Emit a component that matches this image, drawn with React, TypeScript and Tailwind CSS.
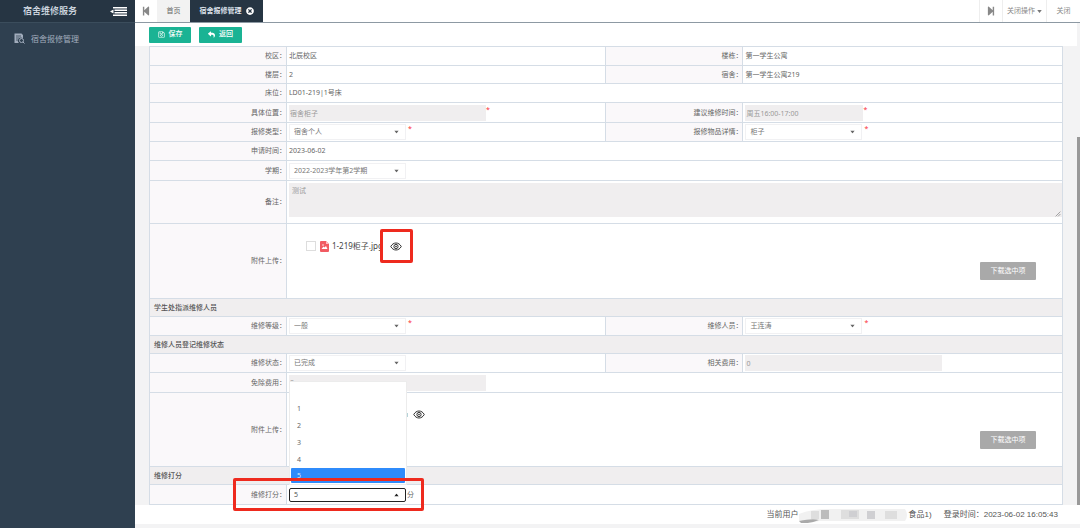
import type { ReactNode } from 'react';
import { FaReply, FaRegSave, FaStepBackward, FaStepForward, FaTimesCircle } from 'react-icons/fa';

const SCORES = ['1', '2', '3', '4'];

const labelCell = 'border border-[#d5dde6] bg-[#faf8fa] p-0 text-right font-normal';
const valueCell = 'border border-[#d5dde6] bg-white p-0 pl-[2px] text-left';

const Required = () => <span className="self-start text-[7px] leading-[10px] text-red-500">*</span>;

const Label = ({ id, children }: { id?: string; children: ReactNode }) => (
  <th scope="row" className={labelCell}>
    <label htmlFor={id}>{children}：</label>
  </th>
);

const Value = ({ children, span = 1 }: { children: ReactNode; span?: number }) => (
  <td colSpan={span} className={valueCell}>
    {children}
  </td>
);

const Caret = ({ up = false }: { up?: boolean }) => (
  <svg viewBox="0 0 6 4" className="pointer-events-none absolute top-1/2 right-[7px] h-[3px] w-[5px] -translate-y-1/2">
    <path d={up ? 'M0 4L3 0L6 4Z' : 'M0 0L3 4L6 0Z'} fill={up ? '#222' : '#666'} />
  </svg>
);

const SelectBox = ({ id, value, required = false }: { id: string; value: string; required?: boolean }) => (
  <div className="flex h-4 items-center gap-[2px]">
    <div className="relative w-[117px]">
      <select
        id={id}
        defaultValue={value}
        className="block h-4 w-full appearance-none border border-[#f1f1f3] bg-white pl-1 text-[7px] text-[#777] outline-none"
      >
        <option>{value}</option>
      </select>
      <Caret />
    </div>
    {required && <Required />}
  </div>
);

const TextBox = ({ id, value, narrow = false, required = false }: { id: string; value: string; narrow?: boolean; required?: boolean }) => (
  <div className="flex h-4 items-center">
    <input
      id={id}
      readOnly
      defaultValue={value}
      className={`h-4 bg-[#f0eeef] pl-px text-[7px] leading-[10px] text-[#999] outline-none ${narrow ? 'w-[118px]' : 'w-[197px]'}`}
    />
    {required && <Required />}
  </div>
);

const Section = ({ children }: { children: ReactNode }) => (
  <tr className="h-[18px]">
    <th colSpan={4} scope="colgroup" className="border border-[#d5dde6] bg-[#f0eeef] p-0 pl-1 text-left font-medium text-[#555]">
      {children}
    </th>
  </tr>
);

const Eye = () => (
  <button type="button" aria-label="预览" className="block">
    <svg viewBox="0 0 24 18" className="h-[9px] w-3" fill="none" stroke="#333" strokeWidth="2">
      <path d="M1.5 9C4 4.500 7.500 2 12 2s8 2.500 10.500 7C20 13.500 16.500 16 12 16S4 13.500 1.500 9Z" />
      <circle cx="12" cy="9" r="4.200" />
      <circle cx="12" cy="9" r="1" />
    </svg>
  </button>
);

const DownloadButton = () => (
  <button type="button" className="mr-[26px] h-[18px] w-14 self-end rounded-[1px] bg-[#a9a9a9] text-[7px] text-white">
    下载选中项
  </button>
);

const Sidebar = () => (
  <aside className="w-[135px] shrink-0 bg-[#2f4050]">
    <div className="flex h-[23px] items-center justify-between border-b border-[#3b4d5c] bg-[#263543] pr-2 pl-[23px]">
      <h1 className="text-[9px] font-medium text-[#dfe4ed]">宿舍维修服务</h1>
      <button type="button" aria-label="收起菜单">
        <svg viewBox="0 0 34 18" className="h-[9px] w-[17px]" fill="#fff">
          <path d="M0 9L7 5V13ZM6 0H34V3H6ZM9 5H34V8H9ZM9 10H34V13H9ZM6 15H34V18H6Z" />
        </svg>
      </button>
    </div>
    <nav>
      <a href="#repair" className="flex h-[31px] items-center gap-[6px] pl-[14px] text-[8px] text-[#a2adbd]">
        <svg viewBox="0 0 22 22" className="size-[11px]" fill="none">
          <path d="M1 1H15L18 4V11A6 6 0 0 0 10 20H1Z" fill="#a2adbd" />
          <path d="M4 6H14M4 10H11M4 14H9" stroke="#2f4050" strokeWidth="1.500" />
          <circle cx="15" cy="15" r="4" stroke="#a2adbd" strokeWidth="2" />
          <path d="M18 18L21 21" stroke="#a2adbd" strokeWidth="2" />
        </svg>
        宿舍报修管理
      </a>
    </nav>
  </aside>
);

const TopTabs = () => (
  <header className="flex h-[23px] shrink-0 items-stretch border-b border-[#8d99a3] bg-white text-[7px] text-[#888]">
    <button type="button" aria-label="向左" className="flex w-[22px] items-center justify-center">
      <FaStepBackward className="size-[10px]" />
    </button>
    <a href="#home" className="flex w-[33px] items-center justify-center bg-[#f2f2f2] text-[#666]">首页</a>
    <a href="#repair" className="flex w-[73px] items-center justify-center gap-1 bg-[#263543] font-bold text-[#dfe4ed]">
      宿舍报修管理
      <FaTimesCircle className="size-2 text-white" />
    </a>
    <div className="grow" />
    <button type="button" aria-label="向右" className="flex w-[23px] items-center justify-center border-l border-[#eee]">
      <FaStepForward className="size-[10px]" />
    </button>
    <button type="button" className="flex w-[45px] items-center justify-center gap-[2px] border-x border-[#eee]">
      关闭操作
      <svg viewBox="0 0 6 4" className="h-[3px] w-[5px]">
        <path d="M0 0L3 4L6 0Z" fill="#777" />
      </svg>
    </button>
    <button type="button" className="w-[33px]">关闭</button>
  </header>
);

const Toolbar = () => (
  <div className="mr-[3px] flex h-[23px] shrink-0 items-center gap-2 bg-white pl-[14px] text-[7px] font-medium text-white">
    <button type="button" className="flex h-4 w-[42px] items-center justify-center gap-1 rounded-[1px] bg-[#1ab394]">
      <FaRegSave className="size-[7px]" />
      保存
    </button>
    <button type="button" className="flex h-4 w-[43px] items-center justify-center gap-1 rounded-[1px] bg-[#1ab394]">
      <FaReply className="size-[7px]" />
      返回
    </button>
  </div>
);

const ScorePicker = () => (
  <div className="relative flex h-4 items-center gap-px">
    <div className="relative w-[117px]">
      <select
        id="score"
        defaultValue="5"
        className="block h-[14px] w-full appearance-none rounded-[2px] border border-[#222] bg-white pl-1 text-[7px] text-[#555] outline-none"
      >
        <option>5</option>
      </select>
      <Caret up />
    </div>
    <span>分</span>
    <ul className="absolute bottom-[18px] left-0 h-[104px] w-[118px] border border-[#ececec] bg-white px-[1px] pt-[18px] text-[7px] text-[#666]">
      {SCORES.map((score) => (
        <li key={score} className="h-[17px] pl-[6px] leading-[17px]">
          {score}
        </li>
      ))}
      <li className="h-[15px] rounded-[1px] bg-[#2f8bfb] pl-[6px] leading-[15px] text-[#d7e8ff]">5</li>
    </ul>
    <div className="pointer-events-none absolute -top-[9px] -left-[56px] h-[33px] w-[191px] rounded-[2px] border-[3px] border-[#ee2a1e]" />
  </div>
);

const RepairTable = () => (
  <table className="w-full table-fixed border-collapse text-[7px] leading-[10px] text-[#666]">
    <colgroup>
      <col className="w-[15%]" />
      <col className="w-[35%]" />
      <col className="w-[15%]" />
      <col className="w-[35%]" />
    </colgroup>
    <tbody>
      <tr className="h-[19px]">
        <Label>校区</Label>
        <Value>北辰校区</Value>
        <Label>楼栋</Label>
        <Value>第一学生公寓</Value>
      </tr>
      <tr className="h-[18px]">
        <Label>楼层</Label>
        <Value>2</Value>
        <Label>宿舍</Label>
        <Value>第一学生公寓219</Value>
      </tr>
      <tr className="h-[19px]">
        <Label>床位</Label>
        <Value span={3}>LD01-219|1号床</Value>
      </tr>
      <tr className="h-5">
        <Label id="place">具体位置</Label>
        <Value><TextBox id="place" value="宿舍柜子" required /></Value>
        <Label id="visit">建议维修时间</Label>
        <Value><TextBox id="visit" value="周五16:00-17:00" narrow required /></Value>
      </tr>
      <tr className="h-[19px]">
        <Label id="kind">报修类型</Label>
        <Value><SelectBox id="kind" value="宿舍个人" required /></Value>
        <Label id="item">报修物品详情</Label>
        <Value><SelectBox id="item" value="柜子" required /></Value>
      </tr>
      <tr className="h-[19px]">
        <Label>申请时间</Label>
        <Value span={3}>2023-06-02</Value>
      </tr>
      <tr className="h-5">
        <Label id="term">学期</Label>
        <Value span={3}><SelectBox id="term" value="2022-2023学年第2学期" /></Value>
      </tr>
      <tr className="h-[43px]">
        <Label id="remark">备注</Label>
        <Value span={3}>
          <div className="relative pb-1">
            <textarea
              id="remark"
              readOnly
              defaultValue="测试"
              className="block h-[34px] w-full resize-none bg-[#f0eeef] px-[3px] py-[3px] text-[7px] leading-[10px] text-[#999] outline-none"
            />
            <svg viewBox="0 0 10 10" className="absolute right-px bottom-1 size-[6px]" stroke="#999" strokeWidth="1.500">
              <path d="M1 9L9 1M5 9L9 5" />
            </svg>
          </div>
        </Value>
      </tr>
      <tr className="h-[75px]">
        <Label>附件上传</Label>
        <Value span={3}>
          <div className="flex h-[38px] justify-between pl-[17px]">
            <div className="flex h-2 items-center text-[8px] text-[#444]">
              <input
                id="photo"
                type="checkbox"
                className="mr-1 size-[10px] appearance-none border border-[#ddd] bg-white"
              />
              <label htmlFor="photo" className="flex items-center gap-[3px]">
                <svg viewBox="0 0 18 22" className="h-[11px] w-[9px]">
                  <path d="M2 0H12L18 6V20Q18 22 16 22H2Q0 22 0 20V2Q0 0 2 0Z" fill="#f15b62" />
                  <path d="M12 0L18 6H12Z" fill="#ffc0c2" />
                  <circle cx="6" cy="8" r="1.500" fill="#fff" />
                  <path d="M3 16L7 11L9 13L12 10L15 16Z" fill="#fff" />
                </svg>
                <span className="w-12 whitespace-nowrap">1-219柜子.jpg</span>
              </label>
              <div className="flex h-[34px] w-[33px] shrink-0 items-center justify-center rounded-[2px] border-[3px] border-[#ee2a1e]">
                <Eye />
              </div>
            </div>
            <DownloadButton />
          </div>
        </Value>
      </tr>
      <Section>学生处指派维修人员</Section>
      <tr className="h-[19px]">
        <Label id="level">维修等级</Label>
        <Value><SelectBox id="level" value="一般" required /></Value>
        <Label id="worker">维修人员</Label>
        <Value><SelectBox id="worker" value="王连涛" required /></Value>
      </tr>
      <Section>维修人员登记维修状态</Section>
      <tr className="h-[19px]">
        <Label id="status">维修状态</Label>
        <Value><SelectBox id="status" value="已完成" /></Value>
        <Label id="cost">相关费用</Label>
        <Value><TextBox id="cost" value="0" /></Value>
      </tr>
      <tr className="h-5">
        <Label id="waived">免除费用</Label>
        <Value span={3}><TextBox id="waived" value="0" /></Value>
      </tr>
      <tr className="h-[74px]">
        <Label>附件上传</Label>
        <Value span={3}>
          <div className="flex h-[38px] justify-between pl-[117px]">
            <div className="flex h-2 items-center gap-[5px]">
              <span className="h-1 w-[2px] bg-[#b5d3d8]" />
              <Eye />
            </div>
            <DownloadButton />
          </div>
        </Value>
      </tr>
      <Section>维修打分</Section>
      <tr className="h-5">
        <Label id="score">维修打分</Label>
        <Value span={3}><ScorePicker /></Value>
      </tr>
    </tbody>
  </table>
);

const StatusBar = () => (
  <footer className="flex h-[23px] shrink-0 items-center justify-end border-b-4 border-[#f3f3f4] bg-white pr-[22px] font-['Liberation_Sans','Noto_Sans_CJK_SC',sans-serif] text-[8px] text-[#555]">
    <span>当前用户</span>
    <svg viewBox="0 0 110 16" className="h-4 w-[110px]">
      <path d="M0 7Q12 2 30 2H106Q110 8 106 14H20Q6 17 0 14Z" fill="#f1f1f1" />
      <path d="M12 4H20V12H12ZM42 3H60V12H42ZM86 4H98V12H86Z" fill="#dedede" />
      <path d="M22 3H30V12H22Z" fill="#bcbcbc" />
      <path d="M50 4H58V10H50ZM68 4H76V12H68Z" fill="#cfcfd2" />
      <path d="M0 14Q14 11 20 13Q10 17 2 16Z" fill="#aaa" />
    </svg>
    <span className="mr-3">食品1)</span>
    <span>登录时间：2023-06-02 16:05:43</span>
  </footer>
);

export default function App() {
  return (
    <div className="flex h-screen overflow-hidden bg-[#f3f3f4] font-['Noto_Sans','Noto_Sans_CJK_SC',sans-serif]">
      <Sidebar />
      <div className="flex min-w-0 grow flex-col">
        <TopTabs />
        <Toolbar />
        <main className="relative z-10 min-h-0 grow pr-[17px] pl-[14px]">
          <RepairTable />
          <div className="absolute top-[91px] right-0 bottom-0 w-[3px] bg-[#999]" />
        </main>
        <StatusBar />
      </div>
    </div>
  );
}
